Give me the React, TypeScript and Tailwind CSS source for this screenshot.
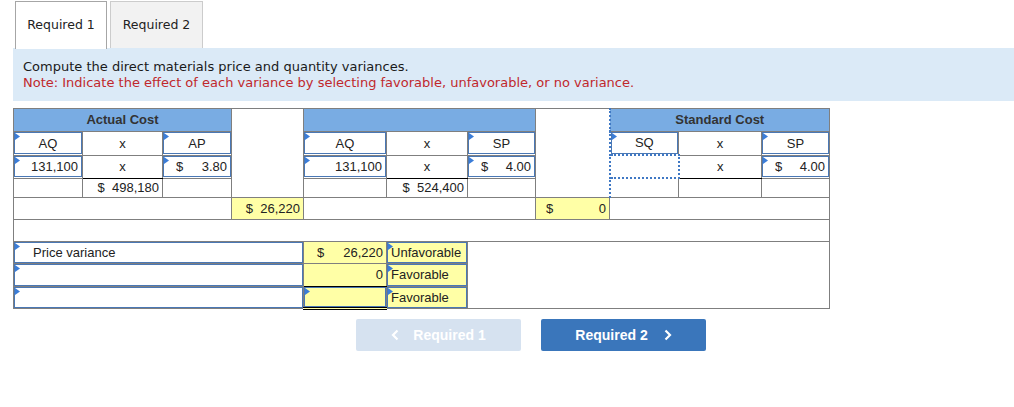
import React from 'react';

const cell = 'border border-[#7f7f7f] p-0';
const blue = 'border border-[#4a78b5]';

function Tri() {
  return (
    <svg className="absolute left-0 top-0" width="5" height="7" viewBox="0 0 5 7">
      <path d="M0 0 L5 3.5 L0 7 Z" fill="#3b7dd8" />
    </svg>
  );
}

// input-like cell: gray grid border outside, blue border inside
function Input({ h, children, className = '', yellow = false }: { h: string; children?: React.ReactNode; className?: string; yellow?: boolean }) {
  return (
    <div className={`relative ${h} ${blue} ${yellow ? 'bg-[#ffffa6]' : 'bg-white'} flex items-center ${className}`}>
      <Tri />
      {children}
    </div>
  );
}

function Plain({ h, children, className = '' }: { h: string; children?: React.ReactNode; className?: string }) {
  return <div className={`${h} flex items-center ${className}`}>{children}</div>;
}

export default function App() {
  return (
    <div className="w-[1014px] h-[407px] bg-white pl-[13px] pt-[1px]" style={{ fontFamily: '"Liberation Sans", Arial, sans-serif' }}>
      {/* tabs */}
      <div className="flex gap-[3px] ml-[2px] h-[47px] text-[12.5px] text-[#222]" style={{ fontFamily: '"DejaVu Sans", Verdana, sans-serif' }}>
        <div className="w-[92px] h-[48px] bg-white border border-b-0 border-[#a6a6a6] flex items-center justify-center relative z-10">Required 1</div>
        <div className="w-[93px] h-[47px] bg-[#f2f2f2] border border-b-0 border-[#cccccc] flex items-center justify-center">Required 2</div>
      </div>

      {/* instructions */}
      <div className="h-[53px] bg-[#dbeaf7] pl-[10px] pt-[11px] text-[13px] leading-[16px]" style={{ fontFamily: '"DejaVu Sans", Verdana, sans-serif' }}>
        <p className="text-[#1a1a1a]">Compute the direct materials price and quantity variances.</p>
        <p className="text-[#c0282c]">Note: Indicate the effect of each variance by selecting favorable, unfavorable, or no variance.</p>
      </div>

      <table className="mt-[7px] border-collapse table-fixed w-[817px] text-[13px] text-[#222] border border-[#7f7f7f]">
        <colgroup>
          {[69, 80, 69, 72, 83, 81, 68, 74, 69, 83, 68].map((w, i) => (
            <col key={i} style={{ width: w }} />
          ))}
        </colgroup>
        <tbody>
          <tr>
            <td colSpan={3} className={`${cell} bg-[#79ace3]`}>
              <Plain h="h-[22px]" className="justify-center font-bold text-[#333]">Actual Cost</Plain>
            </td>
            <td rowSpan={4} className={cell}></td>
            <td colSpan={3} className={`${cell} bg-[#79ace3]`}>
              <Plain h="h-[22px]" />
            </td>
            <td rowSpan={4} className={cell} style={{ borderRightStyle: 'dotted', borderRightColor: '#3f78c4', borderRightWidth: 2 }}></td>
            <td colSpan={3} className={`${cell} bg-[#79ace3]`}>
              <Plain h="h-[22px]" className="justify-center font-bold text-[#333]">Standard Cost</Plain>
            </td>
          </tr>
          <tr>
            <td className={cell}><Input h="h-[22px]" className="justify-center">AQ</Input></td>
            <td className={cell}><Plain h="h-[22px]" className="justify-center">x</Plain></td>
            <td className={cell}><Input h="h-[22px]" className="justify-center">AP</Input></td>
            <td className={cell}><Input h="h-[22px]" className="justify-center">AQ</Input></td>
            <td className={cell}><Plain h="h-[22px]" className="justify-center">x</Plain></td>
            <td className={cell}><Input h="h-[22px]" className="justify-center">SP</Input></td>
            <td className={cell}><Input h="h-[22px]" className="justify-center">SQ</Input></td>
            <td className={cell}><Plain h="h-[22px]" className="justify-center">x</Plain></td>
            <td className={cell}><Input h="h-[22px]" className="justify-center">SP</Input></td>
          </tr>
          <tr>
            <td className={cell}><Input h="h-[21px]" className="justify-end pr-[3px]">131,100</Input></td>
            <td className={`${cell} border-b-black`}><Plain h="h-[21px]" className="justify-center">x</Plain></td>
            <td className={cell}><Input h="h-[21px]" className="justify-between pl-[12px] pr-[3px]"><span>$</span><span>3.80</span></Input></td>
            <td className={cell}><Input h="h-[21px]" className="justify-end pr-[3px]">131,100</Input></td>
            <td className={`${cell} border-b-black`}><Plain h="h-[21px]" className="justify-center">x</Plain></td>
            <td className={cell}><Input h="h-[21px]" className="justify-between pl-[12px] pr-[3px]"><span>$</span><span>4.00</span></Input></td>
            <td className="p-0 border-2 border-dotted border-[#3f78c4]"><Plain h="h-[21px]" /></td>
            <td className={`${cell} border-b-black`}><Plain h="h-[21px]" className="justify-center">x</Plain></td>
            <td className={cell}><Input h="h-[21px]" className="justify-between pl-[12px] pr-[3px]"><span>$</span><span>4.00</span></Input></td>
          </tr>
          <tr>
            <td className={cell}><Plain h="h-[18px]" /></td>
            <td className={cell}><Plain h="h-[18px]" className="justify-end pr-[3px]">$&nbsp; 498,180</Plain></td>
            <td className={cell}><Plain h="h-[18px]" /></td>
            <td className={cell}><Plain h="h-[18px]" /></td>
            <td className={cell}><Plain h="h-[18px]" className="justify-end pr-[3px]">$&nbsp; 524,400</Plain></td>
            <td className={cell}><Plain h="h-[18px]" /></td>
            <td className={cell}><Plain h="h-[18px]" /></td>
            <td className={cell}><Plain h="h-[18px]" /></td>
            <td className={cell}><Plain h="h-[18px]" /></td>
          </tr>
          <tr>
            <td colSpan={3} className={cell}><Plain h="h-[21px]" /></td>
            <td className={`${cell} bg-[#ffffa6]`}><Plain h="h-[21px]" className="justify-end pr-[3px]">$&nbsp; 26,220</Plain></td>
            <td colSpan={3} className={cell}><Plain h="h-[21px]" /></td>
            <td className={`${cell} bg-[#ffffa6]`}><Plain h="h-[21px]" className="justify-between pl-[10px] pr-[3px]"><span>$</span><span>0</span></Plain></td>
            <td colSpan={3} className={cell}><Plain h="h-[21px]" /></td>
          </tr>
          <tr>
            <td colSpan={11} className={cell}><Plain h="h-[21px]" /></td>
          </tr>
          <tr>
            <td colSpan={4} className={cell}><Input h="h-[21px]" className="pl-[18px]">Price variance</Input></td>
            <td className={`${cell} bg-[#ffffa6]`}><Plain h="h-[21px]" className="justify-between pl-[13px] pr-[3px]"><span>$</span><span>26,220</span></Plain></td>
            <td className={cell}><Input h="h-[21px]" yellow className="pl-[3px]">Unfavorable</Input></td>
            <td rowSpan={3} colSpan={5} className={cell}></td>
          </tr>
          <tr>
            <td colSpan={4} className={cell}><Input h="h-[22px]" /></td>
            <td className={`${cell} bg-[#ffffa6] border-b-black`}><Plain h="h-[22px]" className="justify-end pr-[3px]">0</Plain></td>
            <td className={cell}><Input h="h-[22px]" yellow className="pl-[3px]">Favorable</Input></td>
          </tr>
          <tr>
            <td colSpan={4} className={cell}><Input h="h-[21px]" /></td>
            <td className="p-0 border border-[#7f7f7f] border-b-[3px] border-b-black bg-[#ffffa6]" style={{ borderBottomStyle: 'double' }}><Input h="h-[20px]" yellow /></td>
            <td className={cell}><Input h="h-[21px]" yellow className="pl-[3px]">Favorable</Input></td>
          </tr>
        </tbody>
      </table>

      {/* navigation */}
      <div className="flex gap-[20px] pl-[343px] mt-[9px] text-[14px] font-bold text-white">
        <div className="w-[165px] h-[32px] rounded-[2px] bg-[#d6e2f0] flex items-center justify-center gap-[14px]">
          <svg width="8" height="12" viewBox="0 0 8 12"><path d="M6.5 1.5 L2 6 L6.5 10.5" fill="none" stroke="white" strokeWidth="2.2" /></svg>
          <span>Required 1</span>
        </div>
        <div className="w-[165px] h-[32px] rounded-[2px] bg-[#3a76bb] flex items-center justify-center gap-[16px]">
          <span>Required 2</span>
          <svg width="8" height="12" viewBox="0 0 8 12"><path d="M1.5 1.5 L6 6 L1.5 10.5" fill="none" stroke="white" strokeWidth="2.2" /></svg>
        </div>
      </div>
    </div>
  );
}
